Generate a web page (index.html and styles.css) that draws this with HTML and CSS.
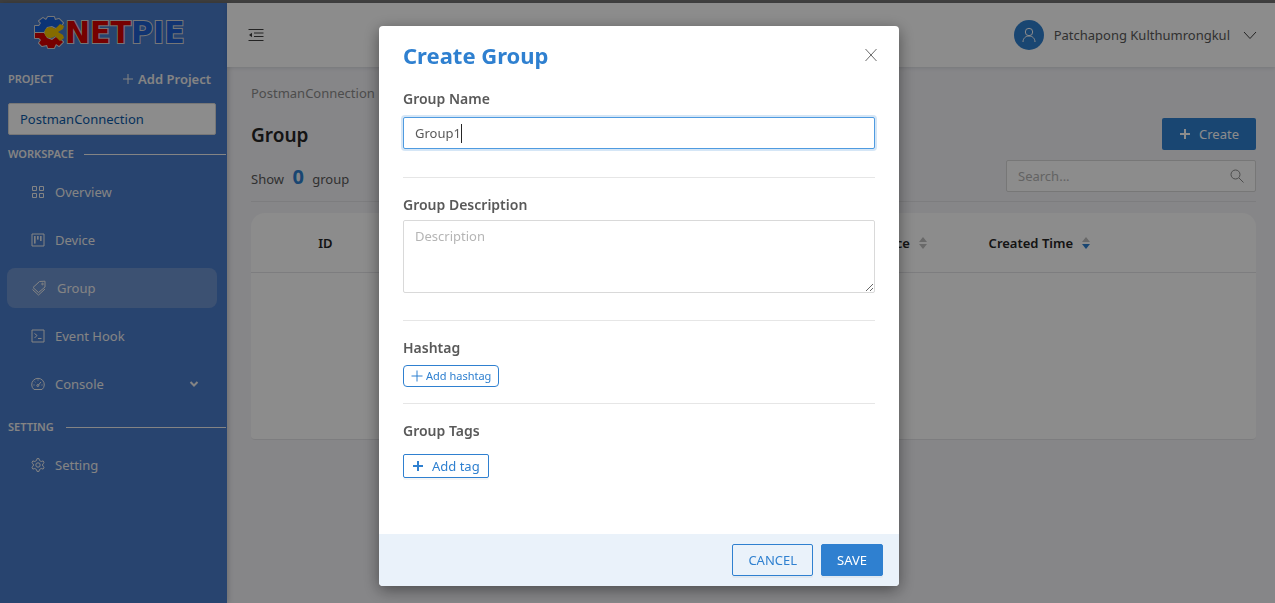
FILE: index.html
```html
<!DOCTYPE html>
<html lang="en">
<head>
<meta charset="utf-8">
<meta name="viewport" content="width=device-width, initial-scale=1">
<title>Group - NETPIE</title>
<link rel="stylesheet" href="styles.css">
</head>
<body>
<div class="app">
  <aside class="sidebar">
    <svg class="logo" viewBox="0 0 164 36" role="img" aria-label="NETPIE">
      <g stroke="#d8d8d8" stroke-width="2" stroke-linejoin="round" fill="#d8d8d8">
        <path d="M5 17V11H9L11 8L9 6L13 3L16 5L18 2H24L25 5L29 4L33 8L30 12L26 13L22 11L17 12L14 17Z"/>
        <path d="M5 18H14L17 23L22 25L26 22L30 24L33 27L29 31L26 29L24 33H18L17 30L12 31L9 28L11 25L9 23H5Z"/>
      </g>
      <path fill="#1560d8" d="M5 17V11H9L11 8L9 6L13 3L16 5L18 2H24L25 5L29 4L33 8L30 12L26 13L22 11L17 12L14 17Z"/>
      <path fill="#d80000" d="M5 18H14L17 23L22 25L26 22L30 24L33 27L29 31L26 29L24 33H18L17 30L12 31L9 28L11 25L9 23H5Z"/>
      <path fill="#f3c400" d="M20 12C22 12 24 13 25 14L30 9L34 11L33 14L28 17L33 20L34 23L30 26L25 21C24 22 22 23 20 23A5.500 5.500 0 0 1 20 12Z"/>
      <text class="logo-text" x="35" y="28"><tspan fill="#d80000">NET</tspan><tspan fill="#1f60d0">PIE</tspan></text>
    </svg>
    <div class="project-head">
      <label class="caption" for="project">PROJECT</label>
      <button class="add-project" type="button">
        <svg class="i10" viewBox="0 0 10 10"><path d="M5 0V10M0 5H10"/></svg>
        Add Project
      </button>
    </div>
    <select class="project-select" id="project"><option>PostmanConnection</option></select>
    <div class="divider"><span class="caption">WORKSPACE</span></div>
    <nav class="menu">
      <a class="item" href="#">
        <svg class="i14" viewBox="0 0 14 14"><path d="M1.500 1.500h4v4h-4zM8.500 1.500h4v4h-4zM1.500 8.500h4v4h-4zM8.500 8.500h4v4h-4z"/></svg>
        Overview
      </a>
      <a class="item" href="#">
        <svg class="i14" viewBox="0 0 14 14"><path d="M1 1h12v12H1zM4 3v7.500M7 3v3.500M10 3v5"/><path d="M3.700 3v7.500M6.700 3v3.500M9.700 3v5"/></svg>
        Device
      </a>
      <a class="item active" href="#">
        <svg class="i16" viewBox="0 0 16 16"><path d="M8.500 1.500L14 1.200V7L7.500 12.500L2 7.500ZM1.500 9.500L7.500 15L14 9"/><circle cx="11.500" cy="4" r=".8"/></svg>
        Group
      </a>
      <a class="item" href="#">
        <svg class="i14" viewBox="0 0 14 14"><path d="M1 1h12v12H1zM3.500 4.500L6 6.500L3.500 9M7 9.500h3.500"/></svg>
        Event Hook
      </a>
      <a class="item" href="#">
        <svg class="i14" viewBox="0 0 14 14"><path d="M3 12.500A6.300 6.300 0 1 1 11 12.500ZM7 8.500L10 5M2.500 8h1M10.500 8h1M7 2.500v1M3.700 4.500l.7.700"/><circle cx="6.800" cy="8.500" r="1"/></svg>
        Console
        <svg class="chevron" viewBox="0 0 10 8"><path d="M1.500 2L5 5.500L8.500 2"/></svg>
      </a>
    </nav>
    <div class="divider wide"><span class="caption">SETTING</span></div>
    <nav class="menu">
      <a class="item" href="#">
        <svg class="i14" viewBox="0 0 14 14"><path d="M5.500 2.500L6 .6h2l.5 1.900 1.700 1 1.900-.6 1 1.800L11.700 6v2l1.400 1.300-1 1.800-1.900-.6-1.700 1-.5 1.900H6l-.5-1.900-1.700-1-1.900.6-1-1.800L2.300 8V6L.9 4.700l1-1.800 1.900.6z"/><circle cx="7" cy="7" r="2.200"/></svg>
        Setting
      </a>
    </nav>
  </aside>

  <div class="page">
    <header class="topbar">
      <button class="icon-button" type="button" aria-label="Collapse menu">
        <svg class="i16 dark" viewBox="0 0 16 16"><path d="M.500 2.500h15M6 6h9.500M6 9.500h9.500M.500 13.500h15"/><path class="solid" d="M1 8L4 5.800V10.200Z"/></svg>
      </button>
      <button class="account" type="button">
        <span class="avatar"><svg class="i16" viewBox="0 0 16 16"><circle cx="8" cy="5" r="3.700"/><path d="M2 15C2 11.500 4.500 9 8 9S14 11.500 14 15"/></svg></span>
        Patchapong Kulthumrongkul
        <svg class="i14 dark" viewBox="0 0 14 14"><path d="M1 4L7 10.500L13 4"/></svg>
      </button>
    </header>
    <main class="content">
      <div class="breadcrumb">PostmanConnection</div>
      <div class="title-row">
        <h1>Group</h1>
        <button class="create" type="button"><svg class="i12" viewBox="0 0 12 12"><path d="M6 1V11M1 6H11"/></svg>Create</button>
      </div>
      <div class="filter-row">
        <p class="count">Show <b>0</b> group</p>
        <label class="search">
          <input type="text" placeholder="Search..." aria-label="Search">
          <svg class="i14" viewBox="0 0 14 14"><circle cx="5.500" cy="5.500" r="4.500"/><path d="M9 9L13.500 13.500"/></svg>
        </label>
      </div>
      <table class="groups">
        <thead>
          <tr>
            <th class="col-id">ID</th>
            <th class="col-main"></th>
            <th class="col-device"><span class="sort">Device <svg viewBox="0 0 8 12"><path d="M0 5L4 0L8 5Z"/><path d="M0 7L4 12L8 7Z"/></svg></span></th>
            <th><span class="sort">Created Time <svg viewBox="0 0 8 12"><path d="M0 5L4 0L8 5Z"/><path class="on" d="M0 7L4 12L8 7Z"/></svg></span></th>
          </tr>
        </thead>
        <tbody><tr><td colspan="4"></td></tr></tbody>
      </table>
    </main>
  </div>
</div>

<div class="overlay">
  <form class="modal" role="dialog" aria-labelledby="modal-title">
    <div class="modal-body">
      <div class="modal-head">
        <h2 id="modal-title">Create Group</h2>
        <button class="icon-button" type="button" aria-label="Close"><svg class="i14 close" viewBox="0 0 14 14"><path d="M1.500 1L12.500 13M12.500 1L1.500 13"/></svg></button>
      </div>
      <section class="field">
        <label for="name">Group Name</label>
        <div class="name-box"><input id="name" type="text" value="Group1"><span class="caret"></span></div>
      </section>
      <section class="field">
        <label for="description">Group Description</label>
        <textarea id="description" placeholder="Description"></textarea>
      </section>
      <section class="field compact">
        <h3>Hashtag</h3>
        <button class="add-hashtag" type="button"><svg class="i12" viewBox="0 0 12 12"><path d="M6 .500V11.500M.500 6H11.500"/></svg>Add hashtag</button>
      </section>
      <section class="field last">
        <h3>Group Tags</h3>
        <button class="add-tag" type="button"><svg class="i12" viewBox="0 0 12 12"><path d="M6 1V11M1 6H11"/></svg>Add tag</button>
      </section>
    </div>
    <div class="modal-foot">
      <button class="cancel" type="button">CANCEL</button>
      <button class="save" type="button">SAVE</button>
    </div>
  </form>
</div>
</body>
</html>
```
FILE: styles.css
```css
* {
  box-sizing: border-box;
}

body {
  margin: 0;
  font: 13px/22px "Noto Sans", "Open Sans", sans-serif;
  color: #595959;
}

button,
input,
select,
textarea {
  font: inherit;
  color: inherit;
  margin: 0;
}

button {
  display: inline-flex;
  align-items: center;
  justify-content: center;
  padding: 0;
  border: 0;
  background: none;
  white-space: nowrap;
}

h1, h2, h3, p {
  margin: 0;
}

svg {
  flex: none;
  fill: none;
  stroke: currentColor;
  stroke-width: 1;
}

.i10 { width: 10px; height: 10px; }
.i12 { width: 12px; height: 12px; }
.i14 { width: 14px; height: 14px; }
.i16 { width: 16px; height: 16px; }
.dark { color: #404040; }
.solid { fill: currentColor; stroke: none; }

.app {
  display: flex;
  min-height: 100vh;
  border-top: 3px solid #747474;
  background: #f4f4f8;
}

/* Sidebar */
.sidebar {
  flex: none;
  width: 227px;
  background: #4a7cca;
  color: #f0f0f0;
  box-shadow: 1px 0 6px rgba(0, 0, 0, 0.2);
}

.logo {
  display: block;
  width: 164px;
  height: 36px;
  margin: 12px 0 0 30px;
  stroke: none;
}

.logo-text {
  font: bold 30px "DejaVu Sans", sans-serif;
  stroke: #d8d8d8;
  stroke-width: 2;
  paint-order: stroke;
}

.caption {
  font-size: 11px;
  font-weight: 600;
}

.project-head {
  display: flex;
  align-items: center;
  justify-content: space-between;
  margin: 17px 16px 0 8px;
}

.add-project {
  gap: 5px;
  font-weight: 600;
}

.project-select {
  display: block;
  appearance: none;
  width: 208px;
  height: 32px;
  margin: 13px 0 0 8px;
  padding: 0 11px;
  border: 1px solid #d9d9d9;
  border-radius: 2px;
  background: #fff;
  color: #0b5aa8;
}

.divider {
  display: flex;
  align-items: center;
  gap: 10px;
  height: 22px;
  margin: 8px 1px 7px 8px;
}

.divider.wide {
  gap: 12px;
}

.divider::after {
  content: "";
  flex: 1;
  height: 1px;
  background: #f0f0f0;
}

.menu {
  display: grid;
  gap: 8px;
  padding: 0 10px 0 7px;
}

.menu + .divider {
  margin-top: 12px;
}

.item {
  display: flex;
  align-items: center;
  gap: 10px;
  height: 40px;
  padding: 0 18px 0 24px;
  border-radius: 8px;
  color: #f0f0f0;
  text-decoration: none;
}

.item.active {
  background: #6e94d0;
}

.chevron {
  width: 10px;
  height: 8px;
  margin-left: auto;
  stroke-width: 2;
}

/* Page */
.page {
  flex: 1;
  min-width: 0;
}

.topbar {
  display: flex;
  align-items: center;
  justify-content: space-between;
  height: 64px;
  padding: 0 18px 0 21px;
  background: #fff;
  box-shadow: 0 1px 4px rgba(0, 21, 41, 0.12);
}

.account {
  gap: 10px;
}

.account > svg {
  margin-left: 3px;
}

.avatar {
  display: grid;
  place-items: center;
  width: 30px;
  height: 30px;
  border-radius: 50%;
  background: #2f80d0;
  color: #fff;
}

.content {
  padding: 15px 19px 24px 24px;
}

.breadcrumb {
  color: #8c8c8c;
}

.title-row,
.filter-row {
  display: flex;
  align-items: center;
  justify-content: space-between;
}

.title-row {
  margin-top: 14px;
}

h1 {
  padding-top: 2px;
  font-size: 19px;
  font-weight: 600;
  color: #262626;
}

.create {
  gap: 8px;
  width: 94px;
  height: 32px;
  border-radius: 2px;
  background: #2f80d0;
  color: #fff;
}

.create svg,
.add-tag svg {
  stroke-width: 2;
}

.filter-row {
  padding: 10px 0 9px;
  border-bottom: 1px solid #e4e4e8;
}

.count {
  padding-top: 4px;
}

.count b {
  margin: 0 5px;
  font-size: 20px;
  color: #2f80d0;
}

.search {
  display: flex;
  align-items: center;
  width: 250px;
  height: 32px;
  padding: 0 11px;
  border: 1px solid #d9d9d9;
  border-radius: 2px;
  background: #fff;
  color: #8c8c8c;
}

.search input {
  flex: 1;
  min-width: 0;
  padding: 0;
  border: 0;
  outline: 0;
  background: none;
}

::placeholder {
  color: #b5b5b5;
  opacity: 1;
}

.groups {
  width: 100%;
  margin-top: 11px;
  table-layout: fixed;
  border-collapse: separate;
  border-spacing: 0;
  border-radius: 14px 14px 4px 4px;
  background: #fff;
}

.groups th {
  height: 60px;
  padding: 0 16px 0 14px;
  border-bottom: 1px solid #e4e4e8;
  text-align: left;
  font-weight: 600;
  color: #262626;
}

.groups td {
  height: 167px;
  border-bottom: 1px solid #e4e4e8;
  border-radius: 0 0 4px 4px;
}

.groups .col-id {
  width: 15%;
  text-align: center;
}

.col-main { width: 45%; }
.col-device { width: 12%; }

.sort {
  display: flex;
  align-items: center;
  gap: 9px;
}

.sort svg {
  width: 8px;
  height: 12px;
  fill: #bfbfbf;
  stroke: none;
}

.sort .on {
  fill: #2f80d0;
}

/* Dialog */
.overlay {
  position: fixed;
  inset: 0;
  display: flex;
  align-items: flex-start;
  justify-content: center;
  padding: 26px 0 0 3px;
  background: rgba(0, 0, 0, 0.45);
}

.modal {
  width: 520px;
  max-width: 100%;
  overflow: hidden;
  border-radius: 4px;
  background: #fff;
  box-shadow: 0 4px 16px rgba(0, 0, 0, 0.45);
}

.modal-body {
  padding: 12px 24px 0;
}

.modal-head {
  display: flex;
  align-items: center;
  justify-content: space-between;
  height: 34px;
}

.modal-head .icon-button {
  width: 24px;
  height: 24px;
  margin-right: -8px;
}

.close {
  color: #6b6b6b;
}

h2 {
  font-size: 22px;
  font-weight: 700;
  line-height: 34px;
  color: #2f80d0;
}

.field {
  display: flex;
  flex-direction: column;
  align-items: flex-start;
  padding: 16px 0 28px;
  border-bottom: 1px solid #e6e6e6;
}

.field label,
.field h3 {
  font-size: 14px;
  font-weight: 600;
  line-height: 22px;
}

.name-box {
  position: relative;
  width: 100%;
  margin-top: 7px;
}

.name-box input {
  display: block;
  width: 100%;
  height: 32px;
  padding: 0 11px;
  border: 1px solid #4f9be0;
  border-radius: 2px;
  outline: 0;
  box-shadow: 0 0 0 2px rgba(47, 128, 208, 0.2);
}

.caret {
  position: absolute;
  left: 58px;
  top: 7px;
  width: 1px;
  height: 19px;
  background: #262626;
}

textarea {
  display: block;
  width: 100%;
  height: 73px;
  margin-top: 4px;
  padding: 4px 11px;
  border: 1px solid #d9d9d9;
  border-radius: 2px;
  outline: 0;
  resize: vertical;
}

.field + .field {
  padding-bottom: 27px;
}

.field.compact {
  padding-bottom: 16px;
}

.field.last {
  border-bottom: 0;
  padding-bottom: 56px;
}

.add-hashtag {
  gap: 3px;
  height: 22px;
  margin-top: 6px;
  padding: 0 7px;
  border: 1px solid #2f80d0;
  border-radius: 4px;
  font-size: 11px;
  color: #2f80d0;
}

.add-tag {
  gap: 8px;
  height: 24px;
  margin-top: 12px;
  padding: 0 8px;
  border: 1px solid #2f80d0;
  border-radius: 2px;
  color: #2f80d0;
  box-shadow: 0 2px 0 rgba(0, 0, 0, 0.04);
}

.modal-foot {
  display: flex;
  justify-content: flex-end;
  gap: 8px;
  padding: 10px 16px;
  background: #eaf2fa;
}

.cancel,
.save {
  height: 32px;
  padding: 0 15px;
  border: 1px solid #2f80d0;
  border-radius: 2px;
  color: #2f80d0;
  box-shadow: 0 2px 0 rgba(0, 0, 0, 0.04);
}

.save {
  background: #2f80d0;
  color: #fff;
}
```
